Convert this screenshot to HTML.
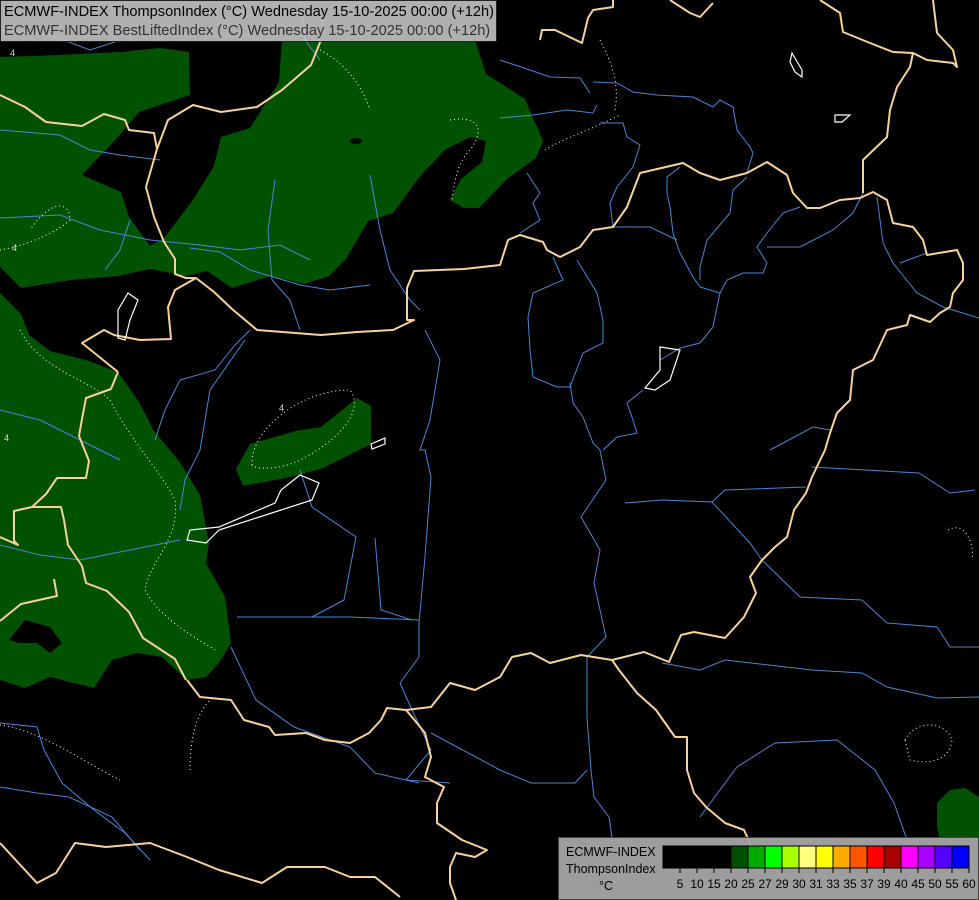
<!DOCTYPE html>
<html><head><meta charset="utf-8"><style>
html,body{margin:0;padding:0;background:#000;width:979px;height:900px;overflow:hidden}
#hdr{position:absolute;left:0;top:0;width:495px;height:40px;background:rgba(200,200,200,0.88);border:1px solid #222;font:14.6px "Liberation Sans",sans-serif;color:#000}
#hdr div{position:absolute;left:3px;white-space:nowrap}
#leg{position:absolute;left:558px;top:837px;width:419px;height:61px;background:rgba(165,165,165,0.95);border:1px solid #444;font:12.5px "Liberation Sans",sans-serif;color:#000}
</style></head><body>
<svg width="979" height="900" style="position:absolute;left:0;top:0">
<g fill="#005200">
<polygon points="0,57 60,55 120,52 160,48 189,52 190,95 139,112 118,137 82,175 121,192 129,217 150,246 164,238 193,200 214,166 221,137 250,128 279,82 282,40 475,40 486,74 525,99 543,141 536,158 507,179 479,208 464,208 450,200 461,179 482,162 486,141 471,137 446,149 421,175 393,213 368,221 346,259 329,276 304,284 271,276 232,288 207,271 186,276 150,269 118,276 71,280 21,288 0,267"/>
<polygon points="0,293 21,314 29,335 50,351 86,360 118,372 139,402 154,431 179,461 200,495 209,543 206,563 225,597 231,643 219,663 206,677 187,680 162,657 137,653 112,660 94,688 50,677 25,688 0,680"/>
<polygon points="236,469 250,444 296,431 321,427 357,398 371,406 371,444 321,469 286,478 243,486"/>
<polygon points="937,827 937,803 950,790 965,788 979,797 979,840 940,840"/>
</g>
<polygon fill="#000" points="9,640 25,620 50,627 62,643 50,653 37,643 19,643"/>
<ellipse cx="356" cy="141" rx="6" ry="3" fill="#000"/>
<g fill="none" stroke="#4a86d0" stroke-width="1">
<polyline points="500,60 530,70 550,77 580,78 590,93"/>
<polyline points="593,82 617,83 633,92 657,95 693,97 713,107 720,100 733,107 737,130 750,147 753,153 747,173"/>
<polyline points="500,118 533,115 567,110 593,113 597,105"/>
<polyline points="600,123 623,123 627,137 640,145 633,167 617,187 610,203 613,227"/>
<polyline points="527,173 540,193 533,203 540,220 520,233"/>
<polyline points="680,167 667,177 667,193 670,207 673,233 680,253 693,277 700,287 720,293 717,307 713,327 700,343 680,348 660,360"/>
<polyline points="747,177 733,190 730,213 707,240 700,267 700,280"/>
<polyline points="613,227 650,227 677,240"/>
<polyline points="800,207 783,213 767,233 757,247 767,263 763,273 743,273 727,280 720,293"/>
<polyline points="767,247 800,247 833,230 853,213 863,193"/>
<polyline points="877,197 883,243 893,263 917,293 943,307 979,318"/>
<polyline points="927,253 900,263"/>
<polyline points="553,257 563,280 533,293 528,317 530,350 533,377 557,387 570,387 583,353 603,343 603,320 597,293 577,260"/>
<polyline points="570,383 573,403 583,417 593,443 600,450 606,480 581,517 600,550 594,583 606,637 587,657 587,717 591,770 594,797 609,817 612,837"/>
<polyline points="643,390 627,403 633,420 637,433 617,437 603,450"/>
<polyline points="770,450 813,427 830,430"/>
<polyline points="425,330 440,360 430,420 420,450 425,450 431,477 425,557 419,623 419,657 400,683 412,710 431,750 406,780 450,783"/>
<polyline points="237,617 350,617 419,620"/>
<polyline points="300,470 312,507 356,537 344,600 312,617"/>
<polyline points="375,538 381,610 412,620"/>
<polyline points="231,647 256,700 294,727 350,747 375,773 419,783"/>
<polyline points="431,733 500,770 531,783 575,783 587,770"/>
<polyline points="625,503 662,500 712,502 725,490 806,487"/>
<polyline points="712,502 750,543 762,560"/>
<polyline points="812,467 919,473 950,493 975,490"/>
<polyline points="762,560 800,597 862,600 887,623 937,627 950,647 979,647"/>
<polyline points="662,663 700,670 725,660 812,670 862,673 887,687 937,698 979,697"/>
<polyline points="700,817 737,767 775,743 837,740 875,770 894,803 906,837"/>
<polyline points="0,723 37,727 44,750 62,783 94,810 125,833 150,860"/>
<polyline points="0,787 37,793 69,797 112,817 140,850"/>
<polyline points="0,130 60,135 90,150 120,155 160,160"/>
<polyline points="0,218 60,215 100,230 150,240 200,245 240,250 280,245 310,260"/>
<polyline points="190,248 220,252 250,270 300,285 330,290 370,285"/>
<polyline points="370,175 380,230 390,270 410,300 420,310"/>
<polyline points="250,330 235,345 215,370 180,380 165,410 155,440"/>
<polyline points="245,340 210,390 200,450 185,480 180,510"/>
<polyline points="0,410 40,420 80,440 120,460"/>
<polyline points="0,545 40,555 80,560 130,550 180,540"/>
<polyline points="300,0 305,40 320,60"/>
<polyline points="0,30 50,35 90,50 115,42"/>
<polyline points="130,220 120,250 105,270"/>
<polyline points="275,180 268,230 272,280 290,300 300,330"/>
</g>
<g fill="none" stroke="#f6d39c" stroke-width="2" stroke-linejoin="round">
<polyline points="0,95 25,107 46,122 82,126 104,114 125,120 129,130 154,133 157,149 146,187 154,217 164,242 175,259 175,274 186,278 196,278 214,292 232,309 257,330 321,335 357,332 393,330 414,320 407,320 407,288 414,271 464,269 500,265 508,240 520,235 543,242 547,250 560,257 580,247 593,230 613,227 627,207 640,173 683,163 700,173 720,180 747,173 767,162 787,175 793,193 807,208 820,208 840,200 860,198 873,192 887,200 893,223 913,227 923,240 927,255 957,250 963,263 963,280 953,293 950,307 940,313 930,322 910,315 907,325 887,330 873,360 853,370 850,400 837,413 830,433 825,450 812,477 806,493 794,510 787,537 775,547 762,560 750,577 756,593 744,617 725,638 694,632 681,635 669,662 644,652 612,660 581,655 550,663 531,653 512,657 500,677 475,690 450,683 431,707 406,710 387,708 381,720 369,733 350,743 325,740 306,733 275,735 269,727 244,720 231,700 200,697 187,680"/>
<polyline points="157,149 168,120 193,105 221,112 257,107 282,90 311,65 321,40"/>
<polyline points="196,278 175,290 168,307 171,339 140,340 114,335 104,330 82,343 118,372"/>
<polyline points="118,372 111,389 86,398 82,419 79,436 89,461 86,478 57,478 46,494 32,507 14,511 14,541 18,545 0,537"/>
<polyline points="32,507 61,507 64,520 68,545 82,566 86,583 107,591 129,612 143,638 175,659 186,680"/>
<polyline points="54,579 57,596 21,604 0,621"/>
<polyline points="863,193 863,160 887,137 890,110 897,87 910,67 913,53 927,60 953,63 957,67 953,50 937,33 933,0"/>
<polyline points="913,53 893,52 870,43 843,32 840,13 820,0"/>
<polyline points="540,40 542,30 555,30 582,43 588,18 593,10 613,7 613,0"/>
<polyline points="670,0 690,13 700,17 713,3"/>
<polyline points="612,660 619,670 637,693 656,710 675,737 687,737 687,770 694,793 706,807 725,823 744,830 750,843 760,870"/>
<polyline points="406,710 412,717 425,733 431,757 425,777 444,787 437,803 437,823 462,840 487,850 475,857 456,853 450,867 450,883 456,900"/>
<polyline points="0,843 37,883 56,873 75,843 106,847 150,843 187,857 219,870 262,883 287,867 325,867 350,877 375,877 400,897"/>
</g>
<g fill="none" stroke="#fff" stroke-width="1.2">
<polygon points="300,475 319,483 312,500 281,510 219,530 206,543 187,540 190,530 219,527 275,503 281,490"/>
<polygon points="128,293 138,300 130,320 125,340 118,338 118,310"/>
<polygon points="792,53 802,70 802,77 795,72 790,62"/>
<polygon points="835,115 850,115 842,122 835,122"/>
<polygon points="371,444 385,438 385,444 372,449"/>
<polygon points="660,347 680,350 670,380 655,390 645,388 660,370"/>
</g>
<g fill="none" stroke="#fff" stroke-width="1" stroke-dasharray="1,3">
<path d="M252,465 C250,430 300,390 350,390 C365,410 340,440 300,460 C280,470 255,470 252,465 Z"/>
<path d="M20,330 C40,370 90,380 110,400 C130,440 160,470 175,500 C180,540 150,560 145,590 C160,620 200,640 215,650"/>
<path d="M0,250 C30,245 60,230 70,220 C70,200 50,200 30,230"/>
<path d="M450,120 C480,115 485,130 470,150 C460,160 455,175 452,200"/>
<path d="M545,150 C560,140 590,130 620,115"/>
<path d="M600,40 C610,60 620,80 615,110"/>
<path d="M320,50 C340,60 360,80 370,110"/>
<path d="M190,770 C190,730 200,710 210,700"/>
<path d="M905,740 C915,720 945,720 952,740 C950,760 930,765 910,760 Z"/>
<path d="M948,530 C965,520 975,545 972,560"/>
<path d="M0,725 C40,730 80,760 120,780"/>
</g>
<g fill="#ddd" font-family="Liberation Sans,sans-serif" font-size="9">
<text x="10" y="56">4</text><text x="12" y="251">4</text><text x="4" y="441">4</text><text x="279" y="411">4</text>
</g>
</svg>
<div id="hdr"><div style="top:3px">ECMWF-INDEX ThompsonIndex (°C) Wednesday 15-10-2025 00:00 (+12h)</div><div style="top:22px;color:#333">ECMWF-INDEX BestLiftedIndex (°C) Wednesday 15-10-2025 00:00 (+12h)</div></div>
<div id="leg">
<div style="position:absolute;left:7px;top:7px">ECMWF-INDEX</div>
<div style="position:absolute;left:7px;top:24px">ThompsonIndex</div>
<div style="position:absolute;left:40px;top:41px">°C</div>
<svg width="419" height="61" style="position:absolute;left:0;top:0">
<g stroke="#000" stroke-width="1">
<rect x="104" y="8" width="17" height="22" fill="#000"/><rect x="121" y="8" width="17" height="22" fill="#000"/><rect x="138" y="8" width="17" height="22" fill="#000"/><rect x="155" y="8" width="17" height="22" fill="#000"/>
<rect x="172" y="8" width="17" height="22" fill="#005000"/><rect x="189" y="8" width="17" height="22" fill="#00aa00"/><rect x="206" y="8" width="17" height="22" fill="#00ff00"/><rect x="223" y="8" width="17" height="22" fill="#aaff00"/>
<rect x="240" y="8" width="17" height="22" fill="#ffff80"/><rect x="257" y="8" width="17" height="22" fill="#ffff00"/><rect x="274" y="8" width="17" height="22" fill="#ffaa00"/><rect x="291" y="8" width="17" height="22" fill="#ff5500"/>
<rect x="308" y="8" width="17" height="22" fill="#ff0000"/><rect x="325" y="8" width="17" height="22" fill="#aa0000"/><rect x="342" y="8" width="17" height="22" fill="#ff00ff"/><rect x="359" y="8" width="17" height="22" fill="#aa00ff"/>
<rect x="376" y="8" width="17" height="22" fill="#5500ff"/><rect x="393" y="8" width="17" height="22" fill="#0000ff"/>
<path d="M121,30v5M138,30v5M155,30v5M172,30v5M189,30v5M206,30v5M223,30v5M240,30v5M257,30v5M274,30v5M291,30v5M308,30v5M325,30v5M342,30v5M359,30v5M376,30v5M393,30v5M410,30v5"/>
</g>
<g font-family="Liberation Sans,sans-serif" font-size="12" text-anchor="middle" fill="#000">
<text x="121" y="50">5</text><text x="138" y="50">10</text><text x="155" y="50">15</text><text x="172" y="50">20</text><text x="189" y="50">25</text><text x="206" y="50">27</text><text x="223" y="50">29</text><text x="240" y="50">30</text><text x="257" y="50">31</text><text x="274" y="50">33</text><text x="291" y="50">35</text><text x="308" y="50">37</text><text x="325" y="50">39</text><text x="342" y="50">40</text><text x="359" y="50">45</text><text x="376" y="50">50</text><text x="393" y="50">55</text><text x="410" y="50">60</text>
</g>
</svg>
</div>
</body></html>
